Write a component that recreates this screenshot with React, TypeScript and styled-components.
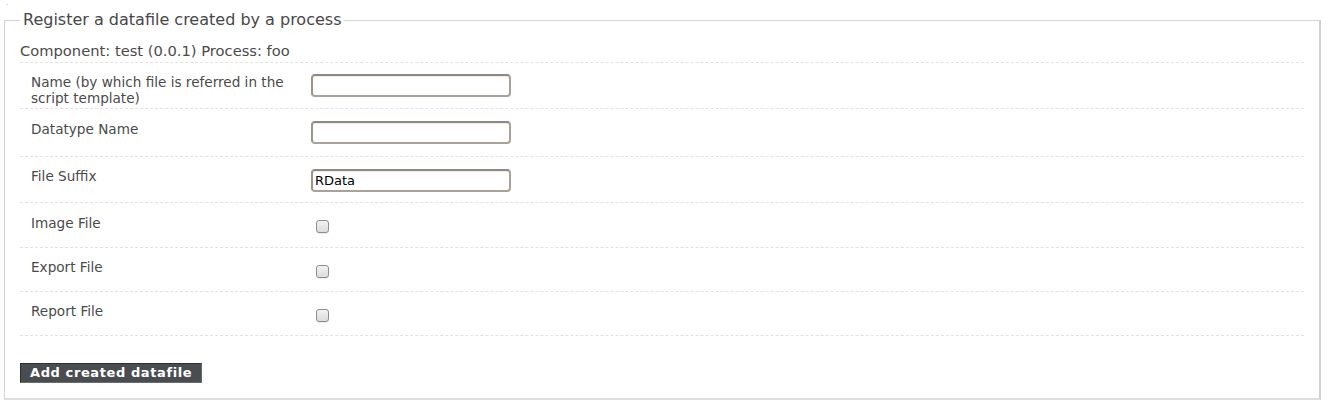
import React from "react";
import styled, { createGlobalStyle } from "styled-components";

const Global = createGlobalStyle`
  html, body { margin: 0; padding: 0; background: #fff; }
  body { font-family: "DejaVu Sans", "Liberation Sans", sans-serif; color: #444; }
`;

const Page = styled.div`
  padding: 0 8px 0 4px;
  width: 1329px;
  box-sizing: border-box;
`;

const Dot = styled.div`
  height: 10px;
  padding-left: 2px;
  font-size: 6px;
  line-height: 6px;
  color: #777;
`;

const Fieldset = styled.fieldset`
  margin: 0;
  padding: 2px 15px 15px 15px;
  border: 1px solid #d4d4d4;
  border-right-width: 2px;
  border-bottom-width: 2px;
  border-right-color: #d0d0d0;
  border-bottom-color: #dedede;
  min-width: 0;
`;

const Legend = styled.legend`
  padding: 0 3px;
  margin-left: 0;
  font-size: 16px;
  line-height: 20px;
  color: #474747;
`;

const Info = styled.div`
  font-size: 14.7px;
  line-height: 18px;
  padding: 10px 0 2px;
  border-bottom: 1px dashed #e2e2e2;
  color: #4a4a4a;
`;

const List = styled.ol`
  list-style: none;
  margin: 0;
  padding: 0;
`;

const Row = styled.li<{ $tall?: number }>`
  display: flex;
  align-items: flex-start;
  padding: 0 0 0 11px;
  height: ${(p) => p.$tall}px;
  box-sizing: border-box;
  border-bottom: 1px dashed #e2e2e2;
`;

const Label = styled.label<{ $top: number }>`
  width: 280px;
  flex: none;
  font-size: 13.6px;
  line-height: 16px;
  padding-top: ${(p) => p.$top}px;
  color: #4a4a4a;
`;

const TextInput = styled.input<{ $top: number }>`
  width: 200px;
  height: 23px;
  box-sizing: border-box;
  margin: ${(p) => p.$top}px 0 0 0;
  padding: 1px 2px;
  border: 2px solid #a8a29a;
  border-top-color: #8f8880;
  border-left-color: #9b958d;
  border-radius: 4px;
  background: #fff;
  box-shadow: inset 0 1px 1px rgba(0, 0, 0, 0.08);
  font-family: "DejaVu Sans", sans-serif;
  font-size: 13px;
  color: #000;
  outline: none;
`;

const Check = styled.input.attrs({ type: "checkbox" })<{ $top: number }>`
  appearance: none;
  -webkit-appearance: none;
  width: 13px;
  height: 13px;
  margin: ${(p) => p.$top}px 0 0 5px;
  border: 1px solid #8e8e8e;
  border-radius: 3px;
  background: linear-gradient(#f2f2f2, #dcdcdc);
  box-shadow: 0 1px 0 rgba(0,0,0,0.08);
  box-sizing: border-box;
`;

const Actions = styled.div`
  padding-top: 26px;
`;

const Button = styled.button`
  font-family: "DejaVu Sans", sans-serif;
  font-weight: bold;
  font-size: 13px;
  letter-spacing: 0.6px;
  color: #fff;
  background: #4a4d50;
  border: 1px solid #2e3032;
  border-right-color: #6a6d70;
  border-bottom-color: #6a6d70;
  padding: 1px 9px 2px;
  height: 20px;
  line-height: 15px;
  cursor: pointer;
`;

export default function App() {
  return (
    <Page>
      <Global />
      <Dot>.</Dot>
      <Fieldset>
        <Legend>Register a datafile created by a process</Legend>
        <Info>Component: test (0.0.1) Process: foo</Info>
        <List>
          <Row $tall={46}>
            <Label $top={11}>Name (by which file is referred in the script template)</Label>
            <TextInput $top={11} />
          </Row>
          <Row $tall={48}>
            <Label $top={12}>Datatype Name</Label>
            <TextInput $top={12} />
          </Row>
          <Row $tall={46}>
            <Label $top={11}>File Suffix</Label>
            <TextInput $top={12} defaultValue="RData" />
          </Row>
          <Row $tall={45}>
            <Label $top={12}>Image File</Label>
            <Check $top={17} />
          </Row>
          <Row $tall={44}>
            <Label $top={11}>Export File</Label>
            <Check $top={17} />
          </Row>
          <Row $tall={44}>
            <Label $top={11}>Report File</Label>
            <Check $top={17} />
          </Row>
        </List>
        <Actions>
          <Button>Add created datafile</Button>
        </Actions>
      </Fieldset>
    </Page>
  );
}
